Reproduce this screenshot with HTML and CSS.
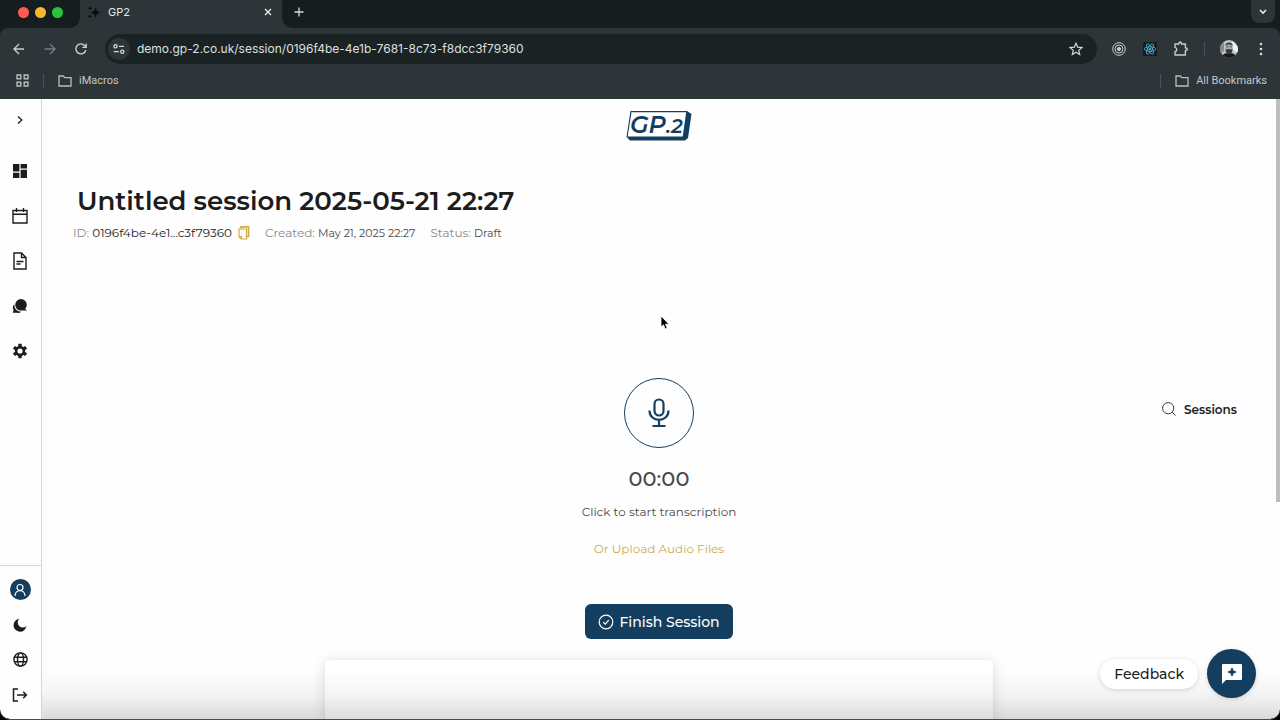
FILE: index.html
```html
<!DOCTYPE html>
<html lang="en">
<head>
    <meta charset="UTF-8">
    <meta name="viewport" content="width=device-width, initial-scale=1.0">
    <title>GP2</title>
    <link rel="stylesheet" href="styles.css">
</head>
<body>
    <div class="window">
        <!-- Tab strip -->
        <header class="tab-strip">
            <div class="lights">
                <span class="light red"></span>
                <span class="light yellow"></span>
                <span class="light green"></span>
            </div>
            <div class="tab">
                <svg class="favicon" width="14" height="14" viewBox="0 0 14 14" fill="#0a0d0e"><path d="M8.500 2.500 10 6l3.500 1.500L10 9l-1.500 3.500L7 9 3.500 7.500 7 6zM3 1l.7 1.500 1.500.7-1.500.7L3 5.400l-.7-1.500L.8 3.200l1.500-.7zM3 9l.7 1.500 1.500.7-1.500.7L3 13.400l-.7-1.500-1.500-.7 1.500-.7z"/></svg>
                <span class="tab-title">GP2</span>
                <button class="icon-btn" aria-label="Close tab"><svg width="8" height="8" viewBox="0 0 8 8" stroke="#e8eaea" stroke-width="1.400"><path d="M1 1l6 6M7 1L1 7"/></svg></button>
            </div>
            <button class="icon-btn new-tab" aria-label="New tab"><svg width="10" height="10" viewBox="0 0 10 10" stroke="#d5d8d9" stroke-width="1.300"><path d="M5 .5v9M.5 5h9"/></svg></button>
            <button class="tab-search" aria-label="Search tabs"><svg width="8" height="6" viewBox="0 0 8 6" fill="none" stroke="#e8eaea" stroke-width="1.600"><path d="M1 1l3 3 3-3"/></svg></button>
        </header>

        <!-- Toolbar -->
        <div class="toolbar">
            <div class="nav-buttons">
                <button class="icon-btn" aria-label="Back"><svg width="12" height="12" viewBox="0 0 12 12" fill="none" stroke="#c9cdce" stroke-width="1.400"><path d="M11 6H1.500M6 1L1 6l5 5"/></svg></button>
                <button class="icon-btn" aria-label="Forward"><svg width="12" height="12" viewBox="0 0 12 12" fill="none" stroke="#757c7f" stroke-width="1.400"><path d="M.5 6h10M6 1l5 5-5 5"/></svg></button>
                <button class="icon-btn" aria-label="Reload"><svg width="12" height="12" viewBox="0 0 12 12" fill="none" stroke="#c9cdce" stroke-width="1.400"><path d="M10.800 7A5 5 0 1 1 9.800 2.700L11 4M11.200.5v3.900H7.300"/></svg></button>
            </div>
            <div class="address">
                <button class="site-info" aria-label="Site information"><svg width="12" height="10" viewBox="0 0 12 10" fill="none" stroke="#d5d8d9" stroke-width="1.300"><circle cx="2.500" cy="2.300" r="1.600"/><path d="M6 2.300h5M.8 7.700h5"/><circle cx="9.300" cy="7.700" r="1.600"/></svg></button>
                <input class="url" type="text" aria-label="Address" value="demo.gp-2.co.uk/session/0196f4be-4e1b-7681-8c73-f8dcc3f79360">
                <button class="icon-btn" aria-label="Bookmark this page"><svg width="14" height="14" viewBox="0 0 14 14" fill="none" stroke="#d5d8d9" stroke-width="1.200"><path d="M7 1.300l1.700 3.900 4.200.4-3.200 2.800 1 4.100L7 10.300l-3.700 2.200 1-4.100L1.100 5.600l4.200-.4z"/></svg></button>
            </div>
            <div class="extensions">
                <button class="icon-btn" aria-label="Recorder"><svg width="14" height="14" viewBox="0 0 14 14" fill="none" stroke="#c9cdce" stroke-width="1"><circle cx="7" cy="7" r="6.300"/><circle cx="7" cy="7" r="4"/><circle cx="7" cy="7" r="1.600" fill="#c9cdce"/></svg></button>
                <button class="icon-btn" aria-label="React Developer Tools"><svg width="14" height="14" viewBox="0 0 14 14" fill="none" stroke="#4fb4d8" stroke-width=".8"><rect width="14" height="14" fill="#161d20" stroke="none"/><ellipse cx="7" cy="7" rx="5.800" ry="2.300"/><ellipse cx="7" cy="7" rx="5.800" ry="2.300" transform="rotate(60 7 7)"/><ellipse cx="7" cy="7" rx="5.800" ry="2.300" transform="rotate(120 7 7)"/><circle cx="7" cy="7" r=".9" fill="#4fb4d8"/></svg></button>
                <button class="icon-btn" aria-label="Extensions"><svg width="16" height="16" viewBox="0 0 16 16" fill="none" stroke="#c9cdce" stroke-width="1.400" stroke-linejoin="round"><path d="M2 3h4V2.200a1.200 1.200 0 0 1 2.400 0V3h4v4h.7a1.200 1.200 0 0 1 0 2.400h-.7V14H2v-3.300a2.200 2.200 0 0 0 0-4.300z"/></svg></button>
                <span class="divider"></span>
                <button class="icon-btn" aria-label="Profile"><svg width="18" height="18" viewBox="0 0 18 18"><clipPath id="face"><circle cx="9" cy="9" r="9"/></clipPath><g clip-path="url(#face)"><rect width="18" height="18" fill="#c4c4c4"/><path d="M0 4l4-2v9l-4 3z" fill="#85898a"/><path d="M12 1l6 6v6l-5-3z" fill="#f4f4f4"/><path d="M2 18c0-4 3-5 7-5s7 1 7 5z" fill="#15191b"/><path d="M5.500 6C5.500 1.500 12.500 1.500 12.500 6v4c0 5-7 5-7 0z" fill="#a9a9a9"/><path d="M5.200 6C4.800 1.200 13.200 1.200 12.800 6c-1-2-6.600-2-7.600 0z" fill="#3a3d3e"/><path d="M5.500 9c1.500.8 2 .2 3.500.2s2 .6 3.500-.2c.2 6.500-7.200 6.500-7 0z" fill="#33373a"/><path d="M6.500 6.800H8M10 6.800h1.500" stroke="#333"/></g></svg></button>
                <button class="icon-btn" aria-label="Menu"><svg width="4" height="14" viewBox="0 0 4 14" fill="#d5d8d9"><circle cx="2" cy="2" r="1.300"/><circle cx="2" cy="7" r="1.300"/><circle cx="2" cy="12" r="1.300"/></svg></button>
            </div>
        </div>

        <!-- Bookmarks bar -->
        <nav class="bookmarks">
            <button class="icon-btn" aria-label="Tab groups"><svg width="13" height="13" viewBox="0 0 13 13" fill="none" stroke="#b9bebf" stroke-width="1.400"><path d="M1 1h3.800v3.800H1zM8.200 1H12v3.800H8.200zM1 8.200h3.800V12H1zM8.200 8.200H12V12H8.200z"/></svg></button>
            <span class="divider"></span>
            <button class="bookmark"><svg width="14" height="12" viewBox="0 0 14 12" fill="none" stroke="#b9bebf" stroke-width="1.300"><path d="M1 1h4.200l1.600 1.700H13V11H1z"/></svg>iMacros</button>
            <span class="divider push"></span>
            <button class="bookmark"><svg width="14" height="12" viewBox="0 0 14 12" fill="none" stroke="#b9bebf" stroke-width="1.300"><path d="M1 1h4.200l1.600 1.700H13V11H1z"/></svg>All Bookmarks</button>
        </nav>

        <div class="page">
            <!-- Sidebar -->
            <aside class="sidebar">
                <button class="side-btn expand" aria-label="Expand sidebar"><svg width="6" height="8" viewBox="0 0 6 8" fill="none" stroke="#1c1c1c" stroke-width="1.300"><path d="M1 .5 4.800 4 1 7.500"/></svg></button>
                <nav class="side-nav">
                    <a class="side-btn" href="#" aria-label="Dashboard"><svg width="14" height="14" viewBox="0 0 14 14" fill="#1c1c1c"><path d="M0 0h6.400v7.600H0zM7.600 0H14v4.600H7.600zM0 8.800h6.400V14H0zM7.600 5.800H14V14H7.600z"/></svg></a>
                    <a class="side-btn" href="#" aria-label="Calendar"><svg width="16" height="16" viewBox="0 0 16 16" fill="none" stroke="#1c1c1c" stroke-width="1.400"><path d="M1 2.500h14V15H1zM1 6.300h14M4.500 0v4M11.500 0v4"/></svg></a>
                    <a class="side-btn" href="#" aria-label="Documents"><svg width="14" height="18" viewBox="0 0 14 18" fill="none" stroke="#1c1c1c" stroke-width="1.400"><path d="M1 1h7.500L13 5.500V17H1zM8.500 1v4.500H13M3.500 9.500h7M3.500 12h4"/></svg></a>
                    <a class="side-btn" href="#" aria-label="Chat"><svg width="16" height="16" viewBox="0 0 16 16" fill="#1c1c1c"><path d="M9 1a5.800 5.800 0 1 1 0 11.600A5.800 5.800 0 0 1 9 1zM10 8l5 4.600H9z"/><path d="M2.300 6.300a6.900 6.900 0 0 0 7.300 7.500A5 5 0 0 1 5 14.700H.8l.8-2.700a4.600 4.600 0 0 1 .7-5.700z"/></svg></a>
                    <a class="side-btn" href="#" aria-label="Settings"><svg width="16" height="16" viewBox="0 0 16 16" fill="none" stroke="#1c1c1c"><circle cx="8" cy="8" r="3.900" stroke-width="2.600"/><path d="M8 .8v2.800M8 12.400v2.800M1.800 4.400l2.400 1.400M11.800 10.200l2.400 1.400M1.800 11.600l2.400-1.400M11.800 5.800l2.400-1.400" stroke-width="3.400"/></svg></a>
                </nav>
                <div class="side-foot">
                    <button class="avatar" aria-label="Account"><svg width="14" height="14" viewBox="0 0 14 14" fill="none" stroke="#fff" stroke-width="1.200"><circle cx="7" cy="4.500" r="3"/><path d="M2 13c0-7.200 10-7.200 10 0"/></svg></button>
                    <button class="side-btn" aria-label="Dark mode"><svg width="14" height="14" viewBox="0 0 14 14" fill="#1c1c1c"><path d="M6.200.7A6.500 6.500 0 1 0 13.500 8 4.600 4.600 0 0 1 6.200.7z"/></svg></button>
                    <button class="side-btn" aria-label="Language"><svg width="15" height="15" viewBox="0 0 15 15" fill="none" stroke="#1c1c1c" stroke-width="1.400"><circle cx="7.500" cy="7.500" r="6.600"/><ellipse cx="7.500" cy="7.500" rx="3" ry="6.600"/><path d="M1.400 5.200h12.200M1.400 9.800h12.200"/></svg></button>
                    <button class="side-btn" aria-label="Log out"><svg width="16" height="14" viewBox="0 0 16 14" fill="none" stroke="#1c1c1c" stroke-width="1.500"><path d="M6 1H1.500v12H6M5 7h9M11.200 3.800 14.400 7l-3.200 3.200"/></svg></button>
                </div>
            </aside>

            <!-- Session -->
            <main class="main">
                <a class="logo" href="#" aria-label="GP.2 home">
                    <svg width="66" height="30" viewBox="0 0 66 30">
                        <path d="M4.500 0H61l4.500 3-3.500 24-3 2.500H4L.5 26z" fill="#143e60"/>
                        <path d="M5.500 1.200h54.700L56.700 25.500H1.700z" fill="#fff"/>
                        <text class="logo-text" x="4" y="22">GP<tspan class="logo-small">.2</tspan></text>
                    </svg>
                </a>
                <h1>Untitled session 2025-05-21 22:27</h1>
                <div class="meta">
                    <span>ID: <b class="strong">0196f4be-4e1...c3f79360</b></span>
                    <button class="icon-btn copy" aria-label="Copy ID"><svg width="12" height="14" viewBox="0 0 12 14" fill="none" stroke="#d3aa48"><path d="M3 2.500V.8h7.500v9.700H9" stroke-width="1.700"/><path d="M1 3h7.500v10H3.200L1 10.800zM1 10.500h2.500V13" stroke-width="1.200"/></svg></button>
                    <span class="created">Created: <b>May 21, 2025 22:27</b></span>
                    <span>Status: <b>Draft</b></span>
                </div>

                <section class="recorder">
                    <button class="mic" aria-label="Start transcription"><svg width="22" height="30" viewBox="0 0 22 30" fill="none" stroke="#143e60" stroke-width="2.200"><rect x="6.500" y="1.500" width="9" height="16" rx="4.500"/><path d="M1.500 12.500c0 12.500 19 12.500 19 0M11 22v6M4.500 28h13"/></svg></button>
                    <div class="timer">00:00</div>
                    <p class="hint">Click to start transcription</p>
                    <button class="upload">Or Upload Audio Files</button>
                    <button class="finish"><svg width="16" height="16" viewBox="0 0 16 16" fill="none" stroke="#fff" stroke-width="1.200"><circle cx="8" cy="8" r="6.800"/><path d="M5.200 8.200l2 2 3.600-4"/></svg>Finish Session</button>
                </section>
                <section class="card"></section>
            </main>

            <button class="sessions"><svg width="14" height="14" viewBox="0 0 14 14" fill="none" stroke="#3c3c3c" stroke-width="1"><circle cx="6.200" cy="6.200" r="5.600"/><path d="M10.200 10.200l3.400 3.400"/></svg>Sessions</button>
            <div class="scrollbar"><div class="thumb"></div></div>
            <div class="shade"></div>
            <div class="feedback">
                <label class="feedback-label" for="feedback">Feedback</label>
                <button class="feedback-btn" id="feedback"><svg width="22" height="22" viewBox="0 0 22 22"><path d="M2 1h18a1 1 0 0 1 1 1v14a1 1 0 0 1-1 1H5l-4 4V2a1 1 0 0 1 1-1z" fill="#fff"/><path d="M11 4l1.500 3.500L16 9l-3.500 1.500L11 14l-1.500-3.500L6 9l3.500-1.500z" fill="#143e60"/></svg></button>
            </div>
            <svg class="pointer" width="10" height="15" viewBox="0 0 10 15"><path d="M1 1v11l2.500-2.200L5.200 14l2-.9-1.700-3.900H9z" fill="#000" stroke="#fff" stroke-width=".8"/></svg>
        </div>
    </div>
</body>
</html>
```
FILE: styles.css
```css
* {
    box-sizing: border-box;
}
body {
    margin: 0;
    background: #000;
    color: #1c1c1c;
    font-family: Montserrat, Inter, sans-serif;
    font-size: 12px;
}
button {
    padding: 0;
    border: none;
    background: none;
    color: inherit;
    font: inherit;
    cursor: pointer;
}
svg {
    display: block;
    flex: none;
}
.window {
    display: flex;
    flex-direction: column;
    height: 100vh;
    overflow: hidden;
    border-bottom: 1px solid #4a4a4a;
    border-radius: 0 0 10px 10px;
    background: #151d1f;
}
.icon-btn {
    display: flex;
    align-items: center;
    justify-content: center;
}

/* Tab strip */
.tab-strip {
    display: flex;
    height: 28px;
    padding-right: 5px;
}
.lights {
    display: flex;
    align-items: center;
    gap: 6px;
    width: 80px;
    padding: 0 0 4px 18px;
}
.light {
    width: 11px;
    height: 11px;
    border-radius: 50%;
}
.red {
    background: #ff5a52;
}
.yellow {
    background: #fdb62c;
}
.green {
    background: #29c53f;
}
.tab {
    position: relative;
    display: flex;
    align-items: center;
    gap: 7px;
    width: 202px;
    padding: 0 10px 5px 7px;
    background: #2e3538;
    color: #e3e6e6;
    font-family: Inter, sans-serif;
    font-size: 11px;
}
/* flared bottom corners */
.tab::before,
.tab::after {
    content: "";
    position: absolute;
    bottom: 0;
    width: 9px;
    height: 9px;
}
.tab::before {
    right: 100%;
    background: radial-gradient(circle at 0 0, transparent 8px, #2e3538 9px);
}
.tab::after {
    left: 100%;
    background: radial-gradient(circle at 100% 0, transparent 8px, #2e3538 9px);
}
.tab-title {
    flex: 1;
}
.new-tab {
    width: 34px;
    padding-bottom: 5px;
}
.tab-search {
    display: flex;
    align-items: center;
    justify-content: center;
    width: 24px;
    height: 23px;
    margin-left: auto;
    border-radius: 0 0 8px 8px;
    background: #2e3538;
}

/* Toolbar */
.toolbar {
    display: flex;
    align-items: center;
    height: 41px;
    padding: 0 11px 0 13px;
    border-radius: 8px 8px 0 0;
    background: #2e3538;
}
.nav-buttons {
    display: flex;
    gap: 19px;
    width: 92px;
}
.address {
    display: flex;
    flex: 1;
    align-items: center;
    height: 30px;
    padding: 0 14px 0 3px;
    border-radius: 15px;
    background: #1b2224;
}
.site-info {
    display: flex;
    align-items: center;
    justify-content: center;
    width: 22px;
    height: 22px;
    border-radius: 50%;
    background: #2e3538;
}
.url {
    flex: 1;
    min-width: 0;
    margin-left: 7px;
    padding: 0;
    border: none;
    outline: none;
    background: none;
    color: #dde0e1;
    font-family: Inter, sans-serif;
    font-size: 12px;
}
.extensions {
    display: flex;
    align-items: center;
    gap: 15px;
    padding-left: 14px;
}
.extensions .icon-btn {
    min-width: 16px;
}
.divider {
    width: 1px;
    height: 14px;
    background: #4a5154;
}

/* Bookmarks bar */
.bookmarks {
    display: flex;
    align-items: center;
    gap: 14px;
    height: 30px;
    padding: 0 13px 7px 16px;
    background: #2e3538;
    color: #c3c7c8;
    font-family: Roboto, sans-serif;
    font-size: 11px;
}
.bookmark {
    display: flex;
    align-items: center;
    gap: 7px;
}
.push {
    margin-left: auto;
}

/* Page */
.page {
    position: relative;
    display: flex;
    flex: 1;
    min-height: 0;
    border-radius: 0 0 10px 10px;
    background: #fefefe;
    overflow: hidden;
}
.sidebar {
    display: flex;
    flex-direction: column;
    width: 42px;
    border-right: 1px solid #d5d5d5;
}
.side-btn {
    display: flex;
    align-items: center;
    justify-content: center;
    width: 40px;
    height: 21px;
}
.expand {
    margin-top: 10px;
}
.side-nav {
    display: flex;
    flex-direction: column;
    gap: 24px;
    margin-top: 30px;
}
.side-foot {
    display: flex;
    flex-direction: column;
    align-items: center;
    gap: 14px;
    margin-top: auto;
    padding: 13px 1px 14px 0;
    border-top: 1px solid #d5d5d5;
}
.avatar {
    display: flex;
    align-items: center;
    justify-content: center;
    width: 21px;
    height: 21px;
    border-radius: 50%;
    background: #143e60;
}

/* Session */
.main {
    display: flex;
    flex: 1;
    flex-direction: column;
    min-width: 0;
    overflow: hidden;
    margin-right: 4px;
    padding: 12px 31px 0;
}
.logo {
    align-self: center;
}
.logo-text {
    fill: #143e60;
    font-family: Montserrat, Inter, sans-serif;
    font-size: 24px;
    font-style: italic;
    font-weight: 600;
}
.logo-small {
    font-size: 20px;
}
h1 {
    margin: 43px 0 0 4px;
    font-size: 26px;
    font-weight: 600;
    line-height: 34px;
}
.meta {
    display: flex;
    align-items: center;
    margin-top: 5px;
    color: #8a8a8a;
    line-height: 20px;
}
.meta b {
    color: #4a4a4a;
    font-size: 11px;
    font-weight: 400;
}
.meta .strong {
    color: #1c1c1c;
    font-size: 12px;
}
.copy {
    margin: 0 15px 0 6px;
}
.created {
    margin-right: 15px;
}
.recorder {
    display: flex;
    flex-direction: column;
    align-items: center;
    margin-top: 135px;
}
.mic {
    display: flex;
    align-items: center;
    justify-content: center;
    width: 70px;
    height: 70px;
    border: 1px solid #143e60;
    border-radius: 50%;
}
.timer {
    margin-top: 17px;
    color: #4a4a4a;
    font-size: 21px;
    font-weight: 500;
    line-height: 28px;
}
.hint {
    margin: 9px 0 0;
    color: #4a4a4a;
    line-height: 20px;
}
.upload {
    margin-top: 17px;
    color: #d0ab4e;
    line-height: 20px;
}
.finish {
    display: flex;
    align-items: center;
    justify-content: center;
    gap: 5px;
    height: 35px;
    margin-top: 45px;
    padding: 0 13px;
    border-radius: 6px;
    background: #143e60;
    color: #fff;
    font-size: 14px;
    font-weight: 500;
}
.card {
    flex: none;
    align-self: center;
    width: 100%;
    max-width: 668px;
    height: 240px;
    margin-top: 21px;
    border-radius: 5px;
    background: #fff;
    box-shadow: 0 2px 14px rgba(0, 0, 0, 0.15);
}

/* Floating controls */
.sessions {
    position: absolute;
    top: 50%;
    right: 43px;
    display: flex;
    align-items: center;
    gap: 8px;
    height: 20px;
    margin-top: -10px;
    font-weight: 600;
}
.scrollbar {
    position: absolute;
    top: 0;
    right: 0;
    bottom: 0;
    width: 4px;
}
.thumb {
    height: 65%;
    background: #bdbdbd;
}
.shade {
    position: absolute;
    right: 0;
    bottom: 0;
    left: 42px;
    height: 50px;
    background: linear-gradient(to bottom, rgba(0, 0, 0, 0), rgba(0, 0, 0, 0.04) 50%, rgba(0, 0, 0, 0.14));
    pointer-events: none;
}
.feedback {
    position: absolute;
    right: 24px;
    bottom: 21px;
    display: flex;
    align-items: center;
    gap: 9px;
}
.feedback-label {
    padding: 5px 14px;
    border-radius: 15px;
    background: #fff;
    box-shadow: 0 1px 5px rgba(0, 0, 0, 0.15);
    font-size: 14px;
    font-weight: 500;
    line-height: 20px;
}
.feedback-btn {
    display: flex;
    align-items: center;
    justify-content: center;
    width: 49px;
    height: 49px;
    border-radius: 50%;
    background: #143e60;
    box-shadow: 0 1px 5px rgba(0, 0, 0, 0.15);
}
.pointer {
    position: absolute;
    top: 216px;
    left: 660px;
}
```
